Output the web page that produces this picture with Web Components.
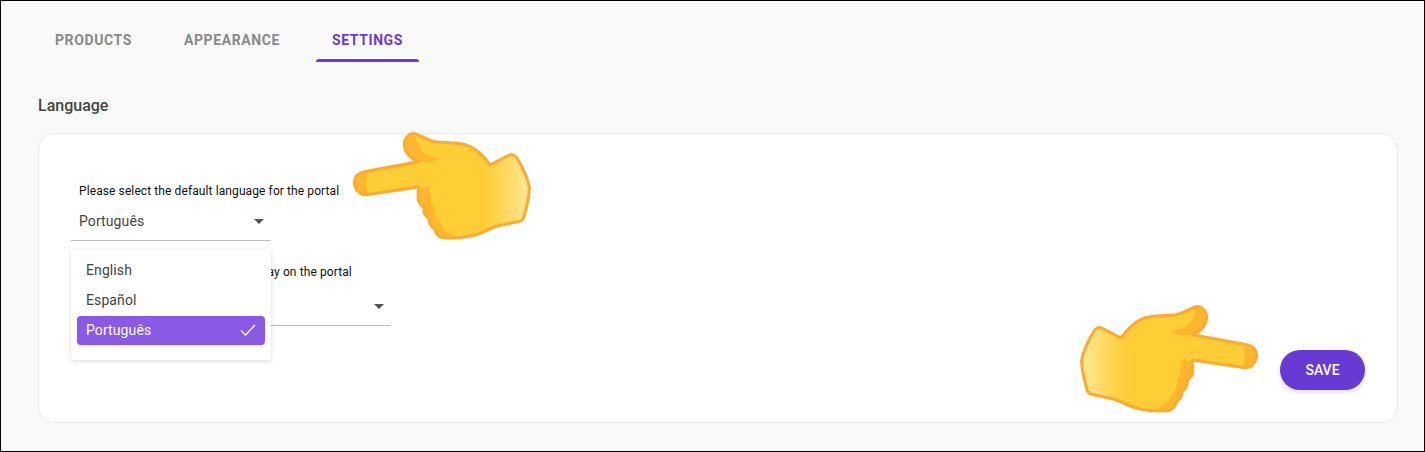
<!DOCTYPE html>
<html lang="en">
<head>
<meta charset="utf-8">
<title>Settings</title>
<style>
    html, body { margin: 0; padding: 0; }
    body { font-family: Roboto, "Liberation Sans", sans-serif; }
</style>
</head>
<body>
<portal-page>
    <portal-tabs>
        <portal-tab>PRODUCTS</portal-tab>
        <portal-tab>APPEARANCE</portal-tab>
        <portal-tab active>SETTINGS</portal-tab>
    </portal-tabs>
    <section-title>Language</section-title>
    <settings-card>
        <lang-select label="Please select the default language for the portal" value="Português" width="200">
            <lang-menu>
                <lang-option>English</lang-option>
                <lang-option>Español</lang-option>
                <lang-option selected>Português</lang-option>
            </lang-menu>
        </lang-select>
        <lang-select label="Please select the language to display on the portal" width="320" gap="4"></lang-select>
        <save-button slot="action">SAVE</save-button>
    </settings-card>
    <pointing-hand style="left: 351px; top: 130px"></pointing-hand>
    <pointing-hand flip style="left: 1078px; top: 303px"></pointing-hand>
</portal-page>

<script>
class PortalPage extends HTMLElement {
    constructor() {
        super();
        this.attachShadow({ mode: 'open' });
        this.shadowRoot.innerHTML = `
            <style>
                :host {
                    display: block;
                    position: relative;
                    box-sizing: border-box;
                    width: 1425px;
                    height: 452px;
                    overflow: hidden;
                    border: 1px solid #000;
                    background: #f9f9f9;
                    padding: 0 26px 0 37px;
                }
            </style>
            <slot></slot>
        `;
    }
}

class PortalTabs extends HTMLElement {
    constructor() {
        super();
        this.attachShadow({ mode: 'open' });
        this.shadowRoot.innerHTML = `
            <style>
                :host {
                    display: flex;
                    gap: 20px;
                    height: 62px;
                    padding-left: 1px;
                }
            </style>
            <slot></slot>
        `;
    }
}

class PortalTab extends HTMLElement {
    constructor() {
        super();
        this.attachShadow({ mode: 'open' });
        this.shadowRoot.innerHTML = `
            <style>
                :host {
                    display: flex;
                    align-items: center;
                    box-sizing: border-box;
                    height: 61px;
                    padding: 29px 16px 12px;
                    position: relative;
                    font: 700 14px Roboto, sans-serif;
                    letter-spacing: 0.6px;
                    color: #898989;
                }
                :host([active]) { color: #6a3bd6; }
                :host([active])::after {
                    content: '';
                    position: absolute;
                    left: 0;
                    right: 0;
                    bottom: 0;
                    height: 3px;
                    border-radius: 3px 3px 0 0;
                    background: #6a3bd6;
                }
            </style>
            <slot></slot>
        `;
    }
}

class SectionTitle extends HTMLElement {
    constructor() {
        super();
        this.attachShadow({ mode: 'open' });
        this.shadowRoot.innerHTML = `
            <style>
                :host {
                    display: block;
                    height: 70px;
                    padding-top: 33px;
                    box-sizing: border-box;
                    font: 500 16px/19px Roboto, sans-serif;
                    color: #444;
                }
            </style>
            <slot></slot>
        `;
    }
}

class SettingsCard extends HTMLElement {
    constructor() {
        super();
        this.attachShadow({ mode: 'open' });
        this.shadowRoot.innerHTML = `
            <style>
                :host {
                    display: flex;
                    justify-content: space-between;
                    align-items: flex-end;
                    box-sizing: border-box;
                    width: 1360px;
                    height: 290px;
                    padding: 0 32px 32px;
                    background: #fff;
                    border: 1px solid #ececec;
                    border-radius: 16px;
                }
                .fields {
                    align-self: flex-start;
                    display: flex;
                    flex-direction: column;
                    gap: 24px;
                    padding-top: 50px;
                }
            </style>
            <div class="fields"><slot></slot></div>
            <slot name="action"></slot>
        `;
    }
}

class LangSelect extends HTMLElement {
    constructor() {
        super();
        this.attachShadow({ mode: 'open' });
    }

    connectedCallback() {
        const label = this.getAttribute('label');
        const value = this.getAttribute('value') || '';
        const width = this.getAttribute('width');
        const gap = Number(this.getAttribute('gap') || 0);

        this.shadowRoot.innerHTML = `
            <style>
                :host {
                    display: block;
                    position: relative;
                    width: ${width}px;
                }
                label {
                    display: block;
                    height: 14px;
                    padding-left: 8px;
                    font: 400 12px/14px Roboto, sans-serif;
                    letter-spacing: 0.1px;
                    color: #111;
                    white-space: nowrap;
                }
                .row {
                    display: flex;
                    align-items: center;
                    justify-content: space-between;
                    box-sizing: border-box;
                    height: ${43 + gap}px;
                    padding: ${4 + gap}px 7px 0 8px;
                    border-bottom: 1px solid #bdbdbd;
                    font: 400 14px/20px Roboto, sans-serif;
                    letter-spacing: 0.1px;
                    color: #444;
                }
                .arrow {
                    width: 0;
                    height: 0;
                    border-left: 5.5px solid transparent;
                    border-right: 5.5px solid transparent;
                    border-top: 5.5px solid #555;
                }
            </style>
            <label>${label}</label>
            <div class="row"><span>${value}</span><i class="arrow"></i></div>
            <slot></slot>
        `;
    }
}

class LangMenu extends HTMLElement {
    constructor() {
        super();
        this.attachShadow({ mode: 'open' });
        this.shadowRoot.innerHTML = `
            <style>
                :host {
                    display: block;
                    position: absolute;
                    z-index: 2;
                    left: 0;
                    top: 66px;
                    box-sizing: border-box;
                    width: 200px;
                    height: 110px;
                    padding: 5px 6px 0;
                    background: #fff;
                    border-radius: 2px;
                    box-shadow: 0 1px 4px rgba(0, 0, 0, 0.16);
                }
            </style>
            <slot></slot>
        `;
    }
}

class LangOption extends HTMLElement {
    constructor() {
        super();
        this.attachShadow({ mode: 'open' });
        this.shadowRoot.innerHTML = `
            <style>
                :host {
                    display: flex;
                    align-items: center;
                    justify-content: space-between;
                    box-sizing: border-box;
                    height: 30px;
                    padding: 0 9px;
                    border-radius: 4px;
                    font: 400 14px/20px Roboto, sans-serif;
                    letter-spacing: 0.1px;
                    color: #444;
                }
                :host([selected]) {
                    height: 29px;
                    margin-top: 1px;
                    padding-bottom: 1px;
                    background: #8a5ae6;
                    color: #fff;
                    box-shadow: 0 1px 3px rgba(0, 0, 0, 0.12);
                }
                svg { display: none; }
                :host([selected]) svg { display: block; }
            </style>
            <span><slot></slot></span>
            <svg width="16" height="14" viewBox="0 0 16 14" fill="none" stroke="#fff" stroke-width="1.4">
                <path d="M1 7.5l4.5 4.5L15 2"/>
            </svg>
        `;
    }
}

class SaveButton extends HTMLElement {
    constructor() {
        super();
        this.attachShadow({ mode: 'open' });
        this.shadowRoot.innerHTML = `
            <style>
                :host {
                    display: flex;
                    align-items: center;
                    justify-content: center;
                    width: 85px;
                    height: 40px;
                    border-radius: 20px;
                    background: #673ad4;
                    color: #fff;
                    font: 500 14px Roboto, sans-serif;
                    box-shadow: 0 2px 5px rgba(103, 58, 212, 0.2);
                }
            </style>
            <slot></slot>
        `;
    }
}

// mao desenhada, aponta para a esquerda; flip espelha
class PointingHand extends HTMLElement {
    constructor() {
        super();
        this.attachShadow({ mode: 'open' });
        this.shadowRoot.innerHTML = `
            <style>
                :host {
                    display: block;
                    position: absolute;
                    z-index: 3;
                    width: 180px;
                    height: 110px;
                }
                :host([flip]) { transform: scaleX(-1); }
                svg { display: block; }
            </style>
            <svg width="180" height="110" viewBox="33 30 540 330">
                <defs>
                    <linearGradient id="skin" gradientUnits="userSpaceOnUse" x1="430" x2="565" y1="0" y2="0">
                        <stop offset="0" stop-color="#ffcd36"/>
                        <stop offset="0.5" stop-color="#ffd960"/>
                        <stop offset="1" stop-color="#ffe998"/>
                    </linearGradient>
                </defs>
                <path fill="url(#skin)" stroke="#ffa92e" stroke-width="9" stroke-linejoin="round"
                    d="M40 185C40 168 52 156 70 152L232 122C210 112 192 95 190 72C190 50 205 36 222 38C240 42 255 58 285 63
                    C320 66 360 64 385 75C412 88 432 110 447 132L505 102C515 98 525 105 530 115C545 140 560 170 565 200
                    C566 225 558 255 548 290C545 300 535 302 525 303L470 315C445 322 420 340 385 346C360 351 325 352 300 349
                    C288 345 284 335 280 322C268 316 264 304 264 292C252 284 246 272 250 260C238 252 228 238 232 224
                    C228 214 238 206 232 198L75 221C55 222 42 205 40 185Z"/>
                <g fill="#ffb52e">
                    <path d="M46 185C46 170 58 160 80 156C75 170 75 198 80 216C62 218 46 202 46 185Z"/>
                    <path d="M196 72C196 55 208 44 222 44C226 62 234 88 260 103L296 114L268 124L238 122C215 110 196 92 196 72Z"/>
                    <path d="M236 202L268 196C262 206 262 216 272 224C266 238 270 250 280 258
                        C276 272 282 292 298 304C302 322 318 338 345 346C325 348 310 346 304 344C294 338 290 330 285 318
                        C272 312 268 302 268 288C256 282 250 270 254 258C242 250 234 238 238 224C234 214 242 208 236 202Z"/>
                </g>
            </svg>
        `;
    }
}

customElements.define('portal-page', PortalPage);
customElements.define('portal-tabs', PortalTabs);
customElements.define('portal-tab', PortalTab);
customElements.define('section-title', SectionTitle);
customElements.define('settings-card', SettingsCard);
customElements.define('lang-select', LangSelect);
customElements.define('lang-menu', LangMenu);
customElements.define('lang-option', LangOption);
customElements.define('save-button', SaveButton);
customElements.define('pointing-hand', PointingHand);
</script>
</body>
</html>
